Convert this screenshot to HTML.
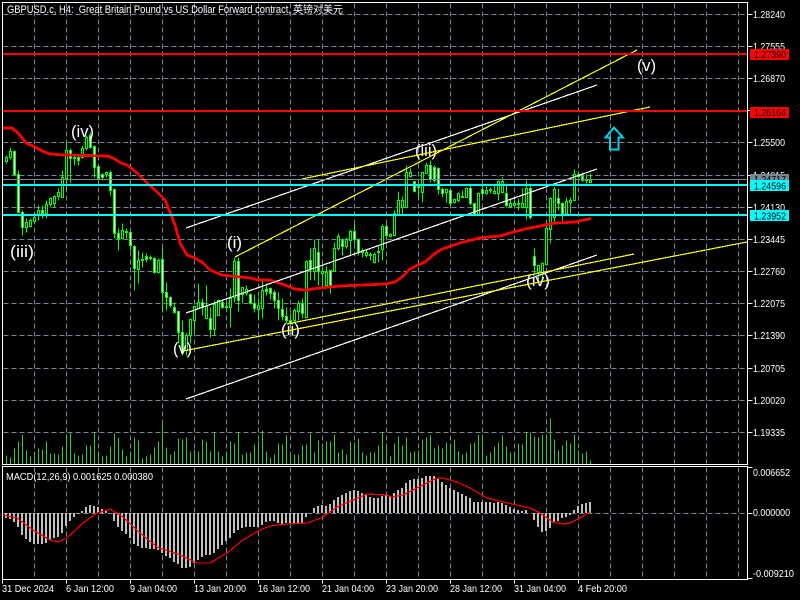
<!DOCTYPE html>
<html><head><meta charset="utf-8"><title>GBPUSD H4</title>
<style>html,body{margin:0;padding:0;background:#000;width:800px;height:600px;overflow:hidden}svg{display:block}text{font-family:"Liberation Sans","Noto Sans CJK SC",sans-serif;fill:#fff;font-size:10.5px}.e{font-size:16.5px}</style></head>
<body>
<svg xmlns="http://www.w3.org/2000/svg" width="800" height="600" viewBox="0 0 800 600">
<rect width="800" height="600" fill="#000"/>
<g transform="translate(.5 .5)" shape-rendering="crispEdges" fill="none">
<path stroke="#778899" stroke-dasharray="5 3" d="M3 14H747M3 46H747M3 78H747M3 110H747M3 142H747M3 175H747M3 207H747M3 239H747M3 271H747M3 303H747M3 335H747M3 368H747M3 400H747M3 432H747M3 513H747"/>
<path stroke="#778899" stroke-dasharray="5 3" d="M34 3V463M66 3V463M98 3V463M130 3V463M162 3V463M194 3V463M226 3V463M258 3V463M290 3V463M322 3V463M354 3V463M386 3V463M418 3V463M450 3V463M482 3V463M514 3V463M546 3V463M578 3V463M610 3V463M642 3V463M674 3V463M706 3V463M738 3V463M34 467V578M66 467V578M98 467V578M130 467V578M162 467V578M194 467V578M226 467V578M258 467V578M290 467V578M322 467V578M354 467V578M386 467V578M418 467V578M450 467V578M482 467V578M514 467V578M546 467V578M578 467V578M610 467V578M642 467V578M674 467V578M706 467V578M738 467V578"/>
<path stroke="#32cd32" d="M6 464V455M10 464V457M14 464V448M18 464V441M22 464V434M26 464V450M30 464V456M34 464V456M38 464V448M42 464V449M46 464V441M50 464V453M54 464V453M58 464V454M62 464V446M66 464V434M70 464V432M74 464V453M78 464V455M82 464V454M86 464V445M90 464V445M94 464V432M98 464V451M102 464V456M106 464V455M110 464V446M114 464V433M118 464V437M122 464V449M126 464V456M130 464V452M134 464V437M138 464V440M142 464V458M146 464V456M150 464V454M154 464V447M158 464V441M162 464V424M166 464V447M170 464V454M174 464V451M178 464V438M182 464V439M186 464V437M190 464V451M194 464V449M198 464V451M202 464V439M206 464V441M210 464V451M214 464V432M218 464V451M222 464V456M226 464V451M230 464V441M234 464V443M238 464V432M242 464V454M246 464V452M250 464V452M254 464V444M258 464V441M262 464V430M266 464V451M270 464V457M274 464V454M278 464V443M282 464V444M286 464V435M290 464V452M294 464V454M298 464V454M302 464V445M306 464V444M310 464V433M314 464V452M318 464V440M322 464V446M326 464V441M330 464V441M334 464V434M338 464V452M342 464V449M346 464V454M350 464V441M354 464V442M358 464V438M362 464V452M366 464V455M370 464V452M374 464V452M378 464V445M382 464V432M386 464V446M390 464V456M394 464V443M398 464V436M402 464V445M406 464V437M410 464V452M414 464V451M418 464V450M422 464V439M426 464V437M430 464V435M434 464V448M438 464V445M442 464V448M446 464V442M450 464V444M454 464V439M458 464V451M462 464V454M466 464V452M470 464V443M474 464V442M478 464V434M482 464V434M486 464V455M490 464V452M494 464V446M498 464V442M502 464V435M506 464V446M510 464V452M514 464V452M518 464V443M522 464V444M526 464V432M530 464V432M534 464V436M538 464V437M542 464V434M546 464V434M550 464V418M554 464V439M558 464V450M562 464V445M566 464V440M570 464V443M574 464V434M578 464V450M582 464V453M586 464V451M590 464V460"/>
<path stroke="#0f0" d="M6 155V163M10 147V159M14 150V175M18 170V212M22 210V235M26 218V232M30 218V227M34 213V223M38 205V220M42 205V218M46 200V218M50 197V207M54 195V207M58 188V200M62 170V197M66 141V190M70 148V182M74 153V165M78 155V165M82 145V158M86 135V150M90 132V148M94 145V177M98 165V178M102 173V180M106 171V177M110 170V195M114 188V238M118 228V250M122 223V239M126 228V238M130 230V250M134 245V290M138 250V283M142 252V267M146 253V262M150 255V260M154 257V273M158 258V273M162 248V312M166 282V310M170 296V307M174 302V313M178 311V343M182 320V355M186 333V355M190 318V343M194 305V332M198 283V308M202 298V315M206 285V318M210 307V337M214 300V335M218 299V315M222 300V308M226 303V310M230 288V327M234 257V302M238 257V311M242 287V303M246 285V295M250 293V304M254 294V312M258 297V320M262 278V318M266 283V295M270 287V299M274 290V308M278 292V320M282 298V320M286 307V323M290 313V325M294 308V322M298 300V320M302 298V318M306 260V318M310 248V280M314 239V280M318 240V285M322 265V288M326 266V288M330 270V293M334 242V270M338 233V250M342 238V255M346 237V248M350 229V255M354 224V243M358 238V255M362 248V257M366 250V257M370 252V260M374 252V263M378 246V262M382 224V260M386 224V240M390 233V237M394 210V235M398 191V215M402 196V215M406 165V208M410 168V177M414 181V192M418 187V198M422 172V202M426 162V173M430 160V182M434 165V182M438 167V194M442 187V197M446 188V202M450 189V207M454 198V203M458 192V202M462 190V197M466 187V197M470 183V205M474 203V215M478 192V215M482 183V197M486 186V194M490 187V193M494 185V194M498 180V200M502 177V193M506 183V207M510 198V208M514 200V207M518 198V210M522 188V208M526 180V219M530 183V219M534 248V273M538 265V282M542 262V278M546 225V265M550 197V243M554 187V222M558 188V210M562 202V223M566 197V215M570 197V213M574 169V200M578 171V178M582 172V181M586 174V183M590 173V182"/>
<path stroke="#0f0" fill="#fff" d="M13 151h2v23h-2zM17 174h2v38h-2zM21 212h2v15h-2zM41 210h2v3h-2zM69 150h2v8h-2zM73 157h2v1h-2zM77 157h2v3h-2zM89 135h2v12h-2zM93 146h2v21h-2zM97 166h2v12h-2zM101 174h2v3h-2zM109 172h2v18h-2zM113 189h2v44h-2zM117 233h2v5h-2zM125 231h2v1h-2zM129 232h2v13h-2zM133 246h2v22h-2zM141 259h2v1h-2zM145 256h2v3h-2zM149 257h2v1h-2zM153 258h2v14h-2zM161 259h2v33h-2zM165 292h2v5h-2zM169 297h2v8h-2zM173 307h2v5h-2zM177 311h2v21h-2zM181 332h2v20h-2zM201 302h2v5h-2zM209 318h2v11h-2zM221 302h2v5h-2zM225 306h2v1h-2zM237 261h2v39h-2zM249 294h2v9h-2zM253 303h2v5h-2zM265 289h2v2h-2zM269 288h2v5h-2zM273 292h2v8h-2zM277 300h2v8h-2zM281 309h2v7h-2zM285 316h2v4h-2zM289 320h2v3h-2zM301 303h2v10h-2zM309 260h2v9h-2zM317 252h2v19h-2zM329 270h2v15h-2zM341 240h2v6h-2zM353 231h2v8h-2zM357 239h2v12h-2zM385 226h2v9h-2zM413 181h2v10h-2zM429 165h2v14h-2zM433 167h2v13h-2zM437 168h2v21h-2zM441 189h2v4h-2zM449 190h2v13h-2zM469 188h2v15h-2zM473 203h2v11h-2zM481 189h2v4h-2zM505 193h2v12h-2zM529 188h2v29h-2zM533 256h2v9h-2zM557 198h2v5h-2zM561 203h2v10h-2zM581 176h2v4h-2z"/>
<path stroke="#0f0" fill="#000" d="M5 157h2v4h-2zM9 151h2v6h-2zM25 222h2v5h-2zM29 220h2v6h-2zM33 217h2v4h-2zM37 210h2v5h-2zM45 204h2v9h-2zM49 198h2v6h-2zM53 196h2v7h-2zM57 192h2v4h-2zM61 177h2v20h-2zM65 150h2v28h-2zM81 148h2v9h-2zM85 137h2v11h-2zM105 172h2v2h-2zM121 230h2v8h-2zM137 260h2v9h-2zM157 260h2v12h-2zM185 335h2v15h-2zM189 319h2v16h-2zM193 306h2v14h-2zM197 302h2v6h-2zM205 306h2v12h-2zM213 304h2v25h-2zM217 300h2v15h-2zM229 298h2v9h-2zM233 261h2v36h-2zM241 287h2v7h-2zM245 289h2v4h-2zM257 305h2v4h-2zM261 290h2v18h-2zM293 310h2v10h-2zM297 303h2v8h-2zM305 261h2v56h-2zM313 248h2v23h-2zM321 271h2v2h-2zM325 272h2v13h-2zM333 248h2v23h-2zM337 236h2v12h-2zM345 239h2v7h-2zM349 231h2v9h-2zM361 250h2v2h-2zM365 252h2v3h-2zM369 254h2v1h-2zM373 254h2v8h-2zM377 251h2v1h-2zM381 226h2v23h-2zM389 234h2v2h-2zM393 213h2v22h-2zM397 200h2v14h-2zM401 200h2v7h-2zM405 172h2v35h-2zM409 172h2v4h-2zM417 186h2v1h-2zM421 172h2v20h-2zM425 165h2v8h-2zM445 189h2v3h-2zM453 199h2v3h-2zM457 193h2v7h-2zM461 196h2v1h-2zM465 188h2v9h-2zM477 193h2v21h-2zM485 190h2v3h-2zM489 189h2v1h-2zM493 191h2v2h-2zM497 181h2v12h-2zM501 181h2v11h-2zM509 203h2v3h-2zM513 203h2v2h-2zM517 203h2v1h-2zM521 203h2v4h-2zM525 188h2v19h-2zM537 265h2v7h-2zM541 263h2v9h-2zM545 228h2v36h-2zM549 198h2v31h-2zM553 189h2v28h-2zM565 201h2v12h-2zM569 200h2v2h-2zM573 174h2v26h-2zM577 174h2v2h-2zM585 179h2v1h-2zM589 180h2v2h-2z"/>
</g>
<path shape-rendering="crispEdges" fill="none" stroke="#c0c0c0" stroke-width="2" d="M6 513V518M10 513V519M14 513V522M18 513V527M22 513V535M26 513V539M30 513V542M34 513V544M38 513V544M42 513V544M46 513V543M50 513V540M54 513V538M58 513V537M62 513V533M66 513V526M70 513V521M74 513V517M78 513V514M82 513V511M86 513V507M90 513V505M94 513V506M98 513V507M102 513V509M106 513V511M114 513V521M118 513V527M122 513V531M126 513V534M130 513V538M134 513V544M138 513V546M142 513V548M146 513V548M150 513V549M154 513V549M158 513V550M162 513V553M166 513V556M170 513V558M174 513V562M178 513V564M182 513V568M186 513V568M190 513V567M194 513V563M198 513V560M202 513V557M206 513V555M210 513V555M214 513V553M218 513V549M222 513V545M226 513V541M230 513V538M234 513V533M238 513V530M242 513V528M246 513V527M250 513V527M254 513V527M258 513V527M262 513V525M266 513V522M270 513V521M274 513V521M278 513V523M282 513V524M286 513V523M290 513V523M294 513V523M298 513V523M302 513V523M306 513V517M314 513V508M318 513V506M322 513V505M326 513V506M330 513V504M334 513V500M338 513V497M342 513V495M346 513V493M350 513V491M354 513V490M358 513V491M362 513V493M366 513V495M370 513V497M374 513V498M378 513V498M382 513V496M386 513V495M390 513V496M394 513V493M398 513V490M402 513V488M406 513V483M410 513V480M414 513V479M418 513V479M422 513V478M426 513V476M430 513V476M434 513V476M438 513V479M442 513V482M446 513V485M450 513V488M454 513V490M458 513V492M462 513V494M466 513V496M470 513V498M474 513V502M478 513V502M482 513V502M486 513V502M490 513V502M494 513V503M498 513V502M502 513V503M506 513V505M510 513V507M514 513V509M518 513V510M522 513V511M526 513V510M534 513V520M538 513V527M542 513V532M546 513V531M550 513V528M554 513V523M558 513V521M562 513V518M566 513V517M570 513V515M574 513V510M578 513V506M582 513V504M586 513V503M590 513V502"/>
<g fill="none" stroke="#ff0000" shape-rendering="crispEdges">
<path stroke-width="2.8" d="M3 128L12 128L18 133L26 143L35 147L42 151L50 154L65 155L108 156L113 158L121 163L127 165L137 173L146 182L155 190L162 197L165 200L170 212L175 225L180 243L187 255L195 258L203 263L210 270L222 275L240 277L251 278L258 280L270 280L285 285L295 289L305 290L320 288L340 286L365 285L385 284L395 282L403 276L410 269L418 265L425 262L433 255L440 250L448 247L460 243L480 238L500 236L510 233L525 229L540 226L555 223L575 222L591 218.500"/>
<path stroke-width="1.2" d="M3 515L17 518L33 530L50 540L58 542L67 538L83 523L97 513L110 509L123 517L140 533L157 547L180 555L197 563L210 563L227 553L243 540L260 530L270 526L287 524L308 523L323 517L337 507L367 494L387 495L392 497L403 495L437 478L443 478L457 482L470 488L487 498L503 502L517 505L530 508L540 513L553 522L563 524L570 523L580 518L590 512"/>
</g>
<g class="labels">
<text class="e" x="71" y="137" textLength="23" lengthAdjust="spacingAndGlyphs">(iv)</text>
<text class="e" x="10" y="257" textLength="24" lengthAdjust="spacingAndGlyphs">(iii)</text>
<text class="e" x="173" y="354" textLength="19" lengthAdjust="spacingAndGlyphs">(v)</text>
<text class="e" x="227" y="248" textLength="15" lengthAdjust="spacingAndGlyphs">(i)</text>
<text class="e" x="281" y="335" textLength="19" lengthAdjust="spacingAndGlyphs">(ii)</text>
<text class="e" x="415" y="156" textLength="22" lengthAdjust="spacingAndGlyphs">(iii)</text>
<text class="e" x="526" y="286" textLength="24" lengthAdjust="spacingAndGlyphs">(iv)</text>
<text class="e" x="637" y="71" textLength="19" lengthAdjust="spacingAndGlyphs">(v)</text>
</g>
<g fill="none" shape-rendering="crispEdges" stroke-width="1.2">
<path stroke="#fff" d="M186 228L597 85M186 313L597 169M186 399L597 255"/>
<path stroke="#ff0" d="M235 257L637 50M302 179L650 107M183 351L747 242M287 324L634 254"/>
<path stroke="#778899" stroke-width="1" d="M3 179.500H747"/>
</g>
<g shape-rendering="crispEdges">
<rect x="3" y="53" width="744" height="2" fill="#f00"/>
<rect x="3" y="110" width="744" height="2" fill="#f00"/>
<rect x="3" y="184" width="744" height="2" fill="#0ff"/>
<rect x="3" y="214" width="744" height="2" fill="#0ff"/>
</g>
<path d="M614 127.500L605.500 137.500H610V149.500H618.500V137.500H623L614 127.500Z" fill="none" stroke="#00d0e8" stroke-width="2" shape-rendering="crispEdges"/>
<g transform="translate(.5 .5)" shape-rendering="crispEdges" fill="none" stroke="#fff">
<rect x="2" y="2" width="745" height="462"/>
<rect x="2" y="466" width="745" height="113"/>
<path d="M747 14h5M747 46h5M747 78h5M747 110h5M747 142h5M747 175h5M747 207h5M747 239h5M747 271h5M747 303h5M747 335h5M747 368h5M747 400h5M747 432h5M747 467h5M747 513h5M747 578h5M2 579v4M66 579v4M130 579v4M194 579v4M258 579v4M322 579v4M386 579v4M450 579v4M514 579v4M578 579v4"/>
</g>
<text x="7" y="13" style="font-size:11px" textLength="284" lengthAdjust="spacingAndGlyphs" xml:space="preserve">GBPUSD.c, H4:  Great Britain Pound vs US Dollar Forward contract,</text>
<text x="293" y="13" style="font-size:10px">英镑对美元</text>
<g>
<text x="753" y="18" textLength="32" lengthAdjust="spacingAndGlyphs">1.28240</text>
<text x="753" y="50" textLength="32" lengthAdjust="spacingAndGlyphs">1.27555</text>
<text x="753" y="82" textLength="32" lengthAdjust="spacingAndGlyphs">1.26870</text>
<text x="753" y="146" textLength="32" lengthAdjust="spacingAndGlyphs">1.25500</text>
<text x="753" y="179" textLength="32" lengthAdjust="spacingAndGlyphs">1.24815</text>
<text x="753" y="211" textLength="32" lengthAdjust="spacingAndGlyphs">1.24130</text>
<text x="753" y="243" textLength="32" lengthAdjust="spacingAndGlyphs">1.23445</text>
<text x="753" y="275" textLength="32" lengthAdjust="spacingAndGlyphs">1.22760</text>
<text x="753" y="307" textLength="32" lengthAdjust="spacingAndGlyphs">1.22075</text>
<text x="753" y="339" textLength="32" lengthAdjust="spacingAndGlyphs">1.21390</text>
<text x="753" y="372" textLength="32" lengthAdjust="spacingAndGlyphs">1.20705</text>
<text x="753" y="404" textLength="32" lengthAdjust="spacingAndGlyphs">1.20020</text>
<text x="753" y="436" textLength="32" lengthAdjust="spacingAndGlyphs">1.19335</text>
</g>
<g shape-rendering="crispEdges">
<rect x="750" y="49" width="39" height="11" fill="#f00"/>
<rect x="750" y="107" width="39" height="11" fill="#f00"/>
<rect x="750" y="174" width="39" height="11" fill="#778899"/>
<rect x="750" y="180" width="39" height="11" fill="#0ff"/>
<rect x="750" y="210" width="39" height="11" fill="#0ff"/>
</g>
<text x="754" y="58" textLength="32" lengthAdjust="spacingAndGlyphs" style="fill:#000">1.27390</text>
<text x="754" y="116" textLength="32" lengthAdjust="spacingAndGlyphs" style="fill:#000">1.26164</text>
<svg x="750" y="174" width="39" height="6" viewBox="750 174 39 6"><text x="754" y="183" textLength="32" lengthAdjust="spacingAndGlyphs" style="fill:#000">1.24717</text></svg>
<text x="754" y="189.500" textLength="32" lengthAdjust="spacingAndGlyphs" style="fill:#000">1.24596</text>
<text x="754" y="219.500" textLength="32" lengthAdjust="spacingAndGlyphs" style="fill:#000">1.23952</text>
<text x="6" y="480" textLength="147" lengthAdjust="spacingAndGlyphs">MACD(12,26,9) 0.001625 0.000380</text>
<text x="753" y="476" textLength="37" lengthAdjust="spacingAndGlyphs">0.006652</text>
<text x="753" y="516" textLength="37" lengthAdjust="spacingAndGlyphs">0.000000</text>
<text x="753" y="577" textLength="41" lengthAdjust="spacingAndGlyphs">-0.009210</text>
<text x="2" y="592" textLength="52" lengthAdjust="spacingAndGlyphs">31 Dec 2024</text>
<text x="66" y="592" textLength="48" lengthAdjust="spacingAndGlyphs">6 Jan 12:00</text>
<text x="130" y="592" textLength="47" lengthAdjust="spacingAndGlyphs">9 Jan 04:00</text>
<text x="194" y="592" textLength="52" lengthAdjust="spacingAndGlyphs">13 Jan 20:00</text>
<text x="258" y="592" textLength="52" lengthAdjust="spacingAndGlyphs">16 Jan 12:00</text>
<text x="322" y="592" textLength="52" lengthAdjust="spacingAndGlyphs">21 Jan 04:00</text>
<text x="386" y="592" textLength="52" lengthAdjust="spacingAndGlyphs">23 Jan 20:00</text>
<text x="450" y="592" textLength="52" lengthAdjust="spacingAndGlyphs">28 Jan 12:00</text>
<text x="514" y="592" textLength="52" lengthAdjust="spacingAndGlyphs">31 Jan 04:00</text>
<text x="578" y="592" textLength="49" lengthAdjust="spacingAndGlyphs">4 Feb 20:00</text>
</svg>
</body></html>
